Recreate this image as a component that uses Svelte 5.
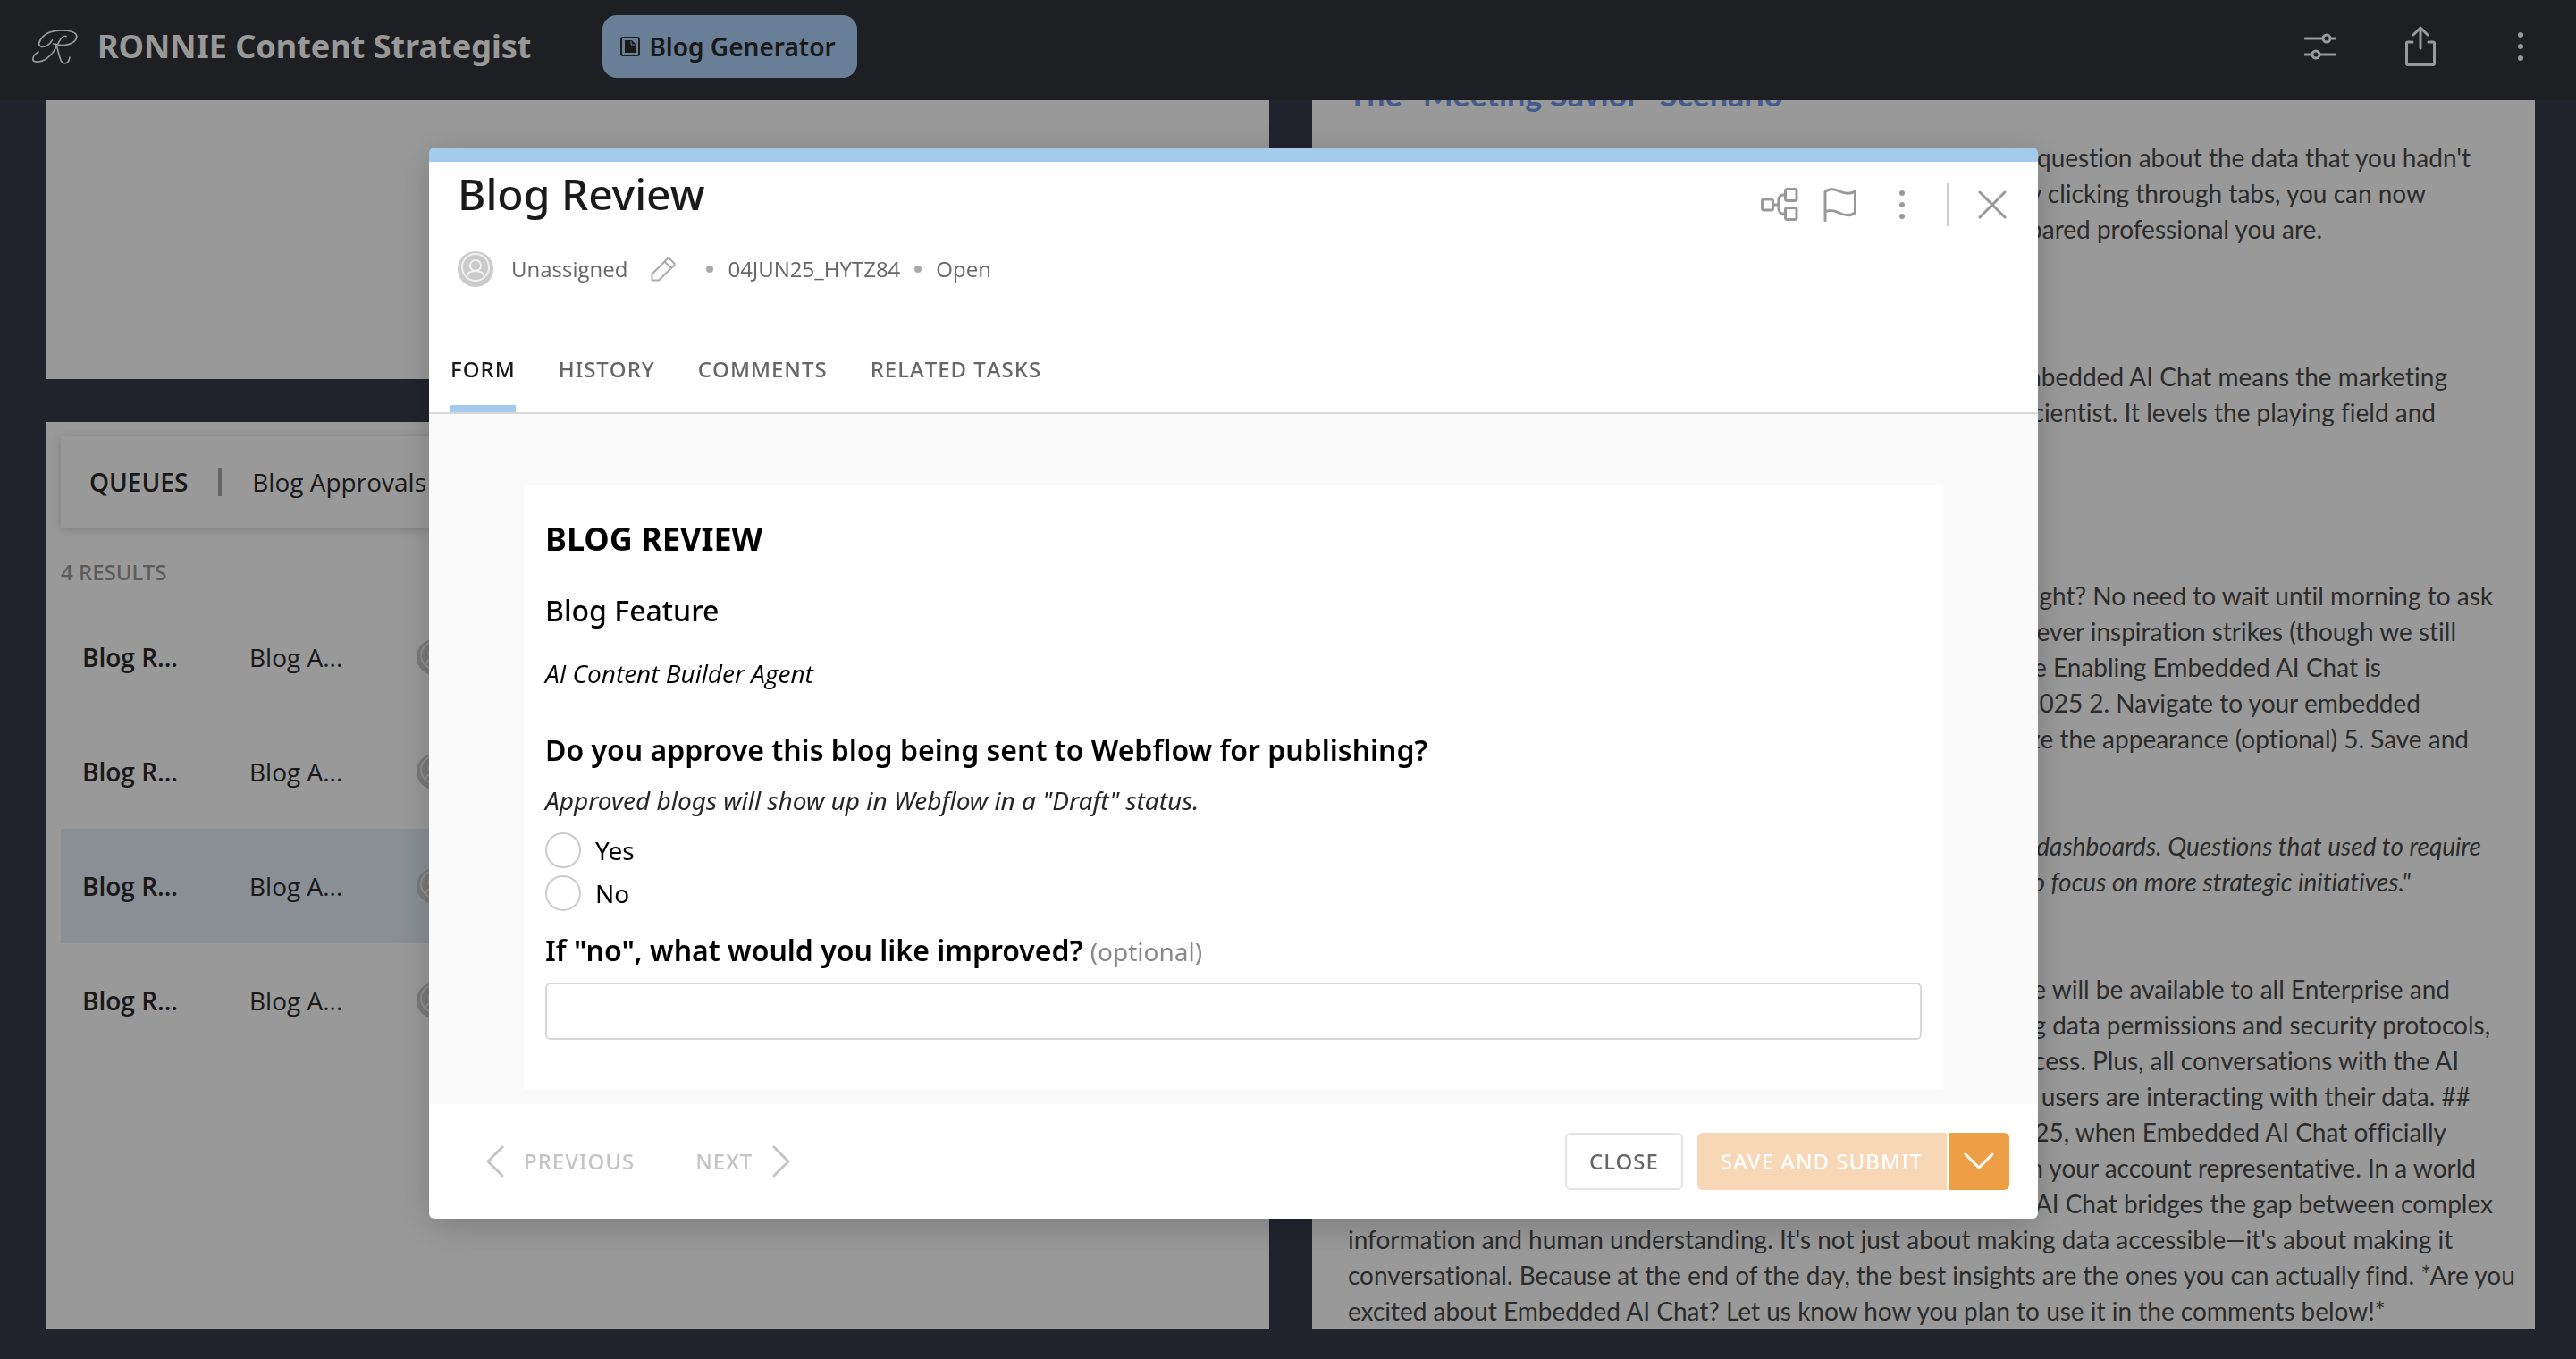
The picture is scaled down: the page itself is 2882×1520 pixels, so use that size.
<script>
  const tabs = ['Form', 'History', 'Comments', 'Related Tasks'];
  let activeTab = 'Form';

  const tasks = [
    { id: 1, name: 'Blog R...', queue: 'Blog A...' },
    { id: 2, name: 'Blog R...', queue: 'Blog A...' },
    { id: 3, name: 'Blog R...', queue: 'Blog A...' },
    { id: 4, name: 'Blog R...', queue: 'Blog A...' }
  ];
  let selected = 3;

  // each line carries its own measure, only the tail shows beside the dialog
  const sections = [
    {
      title: 'The "Meeting Savior" Scenario',
      blocks: [
        {
          lines: [
            [1256, "question about the data that you hadn't"],
            [1206, 'by clicking through tabs, you can now'],
            [1090, 'prepared professional you are.']
          ]
        }
      ]
    },
    {
      blocks: [
        {
          lines: [
            [1230, 'Embedded AI Chat means the marketing'],
            [1217, 'scientist. It levels the playing field and'],
            [400, '']
          ]
        }
      ]
    },
    {
      blocks: [
        {
          lines: [
            [1281, 'midnight? No need to wait until morning to ask'],
            [1240, 'whenever inspiration strikes (though we still'],
            [1156, 'the Enabling Embedded AI Chat is'],
            [1200, '2025 2. Navigate to your embedded'],
            [1254, 'Customize the appearance (optional) 5. Save and']
          ]
        },
        {
          quote: true,
          lines: [
            [1268, 'in dashboards. Questions that used to require'],
            [1189, 'to focus on more strategic initiatives."']
          ]
        },
        {
          lines: [
            [1233, 'feature will be available to all Enterprise and'],
            [1278, 'existing data permissions and security protocols,'],
            [1243, 'access. Plus, all conversations with the AI'],
            [1256, 'users are interacting with their data. ##'],
            [1229, '2025, when Embedded AI Chat officially'],
            [1262, 'in your account representative. In a world'],
            [1281, 'AI Chat bridges the gap between complex']
          ],
          tail: [
            "information and human understanding. It's not just about making data accessible—it's about making it",
            'conversational. Because at the end of the day, the best insights are the ones you can actually find. *Are you',
            'excited about Embedded AI Chat? Let us know how you plan to use it in the comments below!*'
          ]
        }
      ]
    }
  ];

  let approval = '';
  let improvement = '';
</script>

{#snippet avatar()}
  <svg class="avatar" viewBox="0 0 40 40" aria-hidden="true">
    <circle cx="20" cy="20" r="20" fill="#cbcbcb" />
    <g fill="none" stroke="#f1f1f1" stroke-width="2">
      <circle cx="20" cy="18" r="15" />
      <circle cx="20" cy="16" r="6" />
      <path d="M10 29c1-5 5-7 10-7s9 2 10 7" />
    </g>
  </svg>
{/snippet}

<div class="app">
  <header class="topbar">
    <svg class="logo" viewBox="105 85 155 122" aria-hidden="true">
      <path d="M172 125c-8 15-24 24-36 22-14-3-9-21 8-37 18-16 52-20 78-17 24 3 34 12 31 24-5 20-40 32-77 20" />
      <path d="M218 112c-8-4-17 6-23 17-12 24-24 48-46 60-16 9-38 12-41 2-2-9 6-20 18-27" />
      <path d="M184 138c8 19 10 40 17 55 6 13 26 14 29-11" />
    </svg>
    <h1>RONNIE Content Strategist</h1>
    <button class="pill">
      <svg viewBox="0 0 22 22" aria-hidden="true">
        <rect x="1" y="1" width="20" height="20" rx="2" fill="none" stroke="#333" stroke-width="2" />
        <path d="M5 4h8l4 4v10H5z" fill="#2b2b2b" />
        <path d="M12 5v4h4" fill="none" stroke="#aed4fc" />
      </svg>
      Blog Generator
    </button>
    <div class="actions">
      <button aria-label="Filters">
        <svg width="36" height="30" viewBox="0 0 36 30">
          <path d="M1 6h19M30 6h5M1 24h7M18 24h17" />
          <circle cx="25" cy="6" r="4" />
          <circle cx="13" cy="24" r="4" />
        </svg>
      </button>
      <button aria-label="Share">
        <svg width="34" height="46" viewBox="0 0 34 46">
          <path d="M8 18H3a1.500 1.500 0 0 0-1.500 1.500V42A1.500 1.500 0 0 0 3 43.500h28a1.500 1.500 0 0 0 1.500-1.500V19.500A1.500 1.500 0 0 0 31 18h-5M17 25V2M9 10l8-8 8 8" />
        </svg>
      </button>
      <button aria-label="More">
        <svg class="dots" width="8" height="36" viewBox="0 0 8 36">
          <circle cx="4" cy="5" r="3" /><circle cx="4" cy="18" r="3" /><circle cx="4" cy="31" r="3" />
        </svg>
      </button>
    </div>
  </header>

  <main>
    <div class="column">
      <section class="card preview"></section>
      <section class="card queues">
        <div class="queue-bar">
          <strong>QUEUES</strong>
          <span class="bar"></span>
          <span>Blog Approvals</span>
        </div>
        <p class="results">4 RESULTS</p>
        <table>
          <tbody>
            {#each tasks as task}
              <tr class:selected={task.id === selected}>
                <td class="name">{task.name}</td>
                <td class="queue">{task.queue}</td>
                <td>{@render avatar()}</td>
              </tr>
            {/each}
          </tbody>
        </table>
      </section>
    </div>

    <article class="card">
      {#each sections as section}
        <section class="chapter" class:untitled={!section.title}>
          {#if section.title}<h2>{section.title}</h2>{/if}
          {#each section.blocks as block}
            <p class:quote={block.quote}>
              {#each block.lines as [measure, text]}
                <span class="line" style="width: {measure}px">{text}</span>
              {/each}
              {#each block.tail || [] as text}
                <span class="full">{text}</span>
              {/each}
            </p>
          {/each}
        </section>
      {/each}
    </article>
  </main>
</div>

<div class="overlay">
  <div class="modal" role="dialog" aria-labelledby="modal-title">
    <header class="modal-head">
      <div class="heading">
        <h2 id="modal-title">Blog Review</h2>
        <div class="meta">
          {@render avatar()}
          <span class="assignee">Unassigned</span>
          <button class="edit" aria-label="Edit assignee">
            <svg width="28" height="28" viewBox="0 0 28 28">
              <path d="M1.500 19.500 18.500 2.500a2 2 0 0 1 2.800 0l4.700 4.700a2 2 0 0 1 0 2.800L9 26.500H1.500zM15.500 5.500l7.500 7.500" />
            </svg>
          </button>
          <span class="dot"></span>
          <span>04JUN25_HYTZ84</span>
          <span class="dot"></span>
          <span>Open</span>
        </div>
      </div>
      <div class="tools">
        <button aria-label="Workflow">
          <svg width="42" height="38" viewBox="0 0 42 38">
            <rect x="1.500" y="13" width="12" height="12" rx="2" />
            <rect x="27.500" y="1.500" width="12.500" height="13" rx="2" />
            <rect x="27.500" y="22.500" width="12.500" height="13" rx="2" />
            <path d="M13.500 19H20M27 8h-2a5 5 0 0 0-5 5v11a5 5 0 0 0 5 5h2" />
          </svg>
        </button>
        <button aria-label="Flag">
          <svg width="38" height="38" viewBox="0 0 38 38">
            <path d="M2 36.500V4.500C5 1.500 11 .5 17 3.500s12 4.500 18.500.5v24c-6 4.500-12 3-18 0s-11-3.500-15.500-1" />
          </svg>
        </button>
        <button aria-label="More options">
          <svg class="dots" width="8" height="36" viewBox="0 0 8 36">
            <circle cx="4" cy="5" r="3" /><circle cx="4" cy="18" r="3" /><circle cx="4" cy="31" r="3" />
          </svg>
        </button>
        <span class="rule"></span>
        <button aria-label="Close dialog">
          <svg width="32" height="32" viewBox="0 0 32 32"><path d="m2 2 28 28M30 2 2 30" /></svg>
        </button>
      </div>
    </header>

    <nav class="tabs">
      {#each tabs as tab}
        <button class:active={tab === activeTab} on:click={() => (activeTab = tab)}>{tab}</button>
      {/each}
    </nav>

    <div class="modal-body">
      <form class="sheet">
        <h3>BLOG REVIEW</h3>
        <p class="feature">Blog Feature</p>
        <p class="agent">AI Content Builder Agent</p>
        <fieldset>
          <legend>Do you approve this blog being sent to Webflow for publishing?</legend>
          <p class="hint">Approved blogs will show up in Webflow in a "Draft" status.</p>
          <label><input type="radio" name="approval" value="yes" bind:group={approval} />Yes</label>
          <label><input type="radio" name="approval" value="no" bind:group={approval} />No</label>
        </fieldset>
        <label class="field-label" for="improvement">
          If "no", what would you like improved? <small>(optional)</small>
        </label>
        <input id="improvement" type="text" bind:value={improvement} />
      </form>
    </div>

    <footer>
      <button class="step">
        <svg width="20" height="36" viewBox="0 0 20 36"><path d="M18 2 2 18l16 16" /></svg>
        PREVIOUS
      </button>
      <button class="step">
        NEXT
        <svg width="20" height="36" viewBox="0 0 20 36"><path d="m2 2 16 16L2 34" /></svg>
      </button>
      <div class="submit">
        <button class="close">CLOSE</button>
        <button class="save">SAVE AND SUBMIT</button>
        <button class="more" aria-label="More submit options">
          <svg width="34" height="20" viewBox="0 0 34 20"><path d="m2 2 15 15L32 2" /></svg>
        </button>
      </div>
    </footer>
  </div>
</div>

<style>
  :global(body) {
    margin: 0;
    background: #373c4b;
  }

  .app,
  .overlay {
    font-family: 'Noto Sans', 'Open Sans', sans-serif;
    font-size: 28px;
    line-height: 40px;
    color: #2b2b2b;
  }

  .app *,
  .overlay * {
    box-sizing: border-box;
  }

  h1, h2, h3, p {
    margin: 0;
  }

  button {
    border: 0;
    padding: 0;
    background: none;
    font: inherit;
    color: inherit;
    cursor: pointer;
  }

  svg {
    display: block;
    flex: none;
    fill: none;
    stroke-linecap: round;
    stroke-linejoin: round;
  }

  .avatar {
    width: 40px;
    height: 40px;
  }

  .app {
    display: flex;
    flex-direction: column;
    height: 100vh;
  }

  .topbar {
    display: flex;
    align-items: center;
    height: 112px;
    padding: 0 58px 8px 36px;
    background: #32343a;
    color: #fff;
  }

  .logo {
    width: 52px;
    height: 42px;
    margin-right: 21px;
    stroke: #fff;
    stroke-width: 5;
  }

  h1 {
    font-size: 36px;
    line-height: 48px;
    font-weight: 700;
  }

  .pill {
    display: flex;
    align-items: center;
    gap: 10px;
    height: 70px;
    margin-left: 80px;
    padding: 0 24px 0 20px;
    border-radius: 16px;
    background: #aed4fc;
    color: #2b2b2b;
    font-weight: 600;
  }

  .pill svg {
    width: 22px;
    height: 22px;
  }

  .actions {
    display: flex;
    align-items: center;
    gap: 77px;
    margin-left: auto;
  }

  .actions button:last-child {
    margin-left: 14px;
  }

  .actions svg {
    stroke: #fff;
    stroke-width: 3;
  }

  .actions .dots {
    fill: #fff;
    stroke: none;
  }

  main {
    display: grid;
    grid-template-columns: 1fr 1fr;
    gap: 48px;
    flex: 1;
    min-height: 0;
    padding: 0 46px 34px 52px;
  }

  .column,
  article {
    min-width: 0;
    min-height: 0;
  }

  .column {
    display: flex;
    flex-direction: column;
    gap: 48px;
  }

  .card {
    background: #fff;
  }

  .preview {
    height: 312px;
  }

  .queues {
    flex: 1;
    padding: 16px;
  }

  .queue-bar,
  table,
  .meta,
  .agent {
    font-family: 'Open Sans', 'Noto Sans', sans-serif;
  }

  .queue-bar {
    display: flex;
    align-items: center;
    gap: 34px;
    height: 102px;
    padding: 0 32px;
    box-shadow: 0 2px 10px rgba(0, 0, 0, 0.2);
  }

  .queue-bar strong {
    font-weight: 600;
  }

  .bar {
    width: 4px;
    height: 32px;
    background: #aaa;
  }

  .results {
    margin: 30px 0 11px;
    font-size: 24px;
    font-weight: 500;
    color: #999;
  }

  table {
    width: 100%;
    border-collapse: collapse;
    table-layout: fixed;
  }

  tr {
    height: 128px;
  }

  tr.selected {
    background: #e4eff8;
  }

  td {
    padding: 0;
  }

  .name {
    width: 211px;
    padding-left: 24px;
    font-weight: 600;
  }

  .queue {
    width: 187px;
  }

  article {
    display: flex;
    flex-direction: column;
    justify-content: flex-end;
    overflow: hidden;
    padding: 0 40px;
    font-family: Lato, sans-serif;
    font-variant-ligatures: none;
    color: #4a4a4a;
  }

  article h2 {
    margin-bottom: 28px;
    font-size: 36px;
    line-height: 45px;
    font-weight: 700;
    color: #7396ec;
  }

  .untitled {
    margin-top: 125px;
  }

  .chapter p + p {
    margin-top: 80px;
  }

  .quote {
    font-style: italic;
  }

  .line,
  .full {
    display: block;
    height: 40px;
    white-space: nowrap;
  }

  .line {
    text-align: right;
  }

  .overlay {
    position: fixed;
    inset: 0;
    display: flex;
    align-items: flex-start;
    padding: 165px 602px 0 480px;
    background: rgba(0, 0, 0, 0.4);
  }

  .modal {
    flex: 1;
    overflow: hidden;
    border-top: 16px solid #a4caec;
    border-radius: 6px;
    background: #fff;
    box-shadow: 0 8px 40px rgba(0, 0, 0, 0.2);
  }

  .modal-head {
    display: flex;
    justify-content: space-between;
    padding: 4px 35px 0 32px;
  }

  .modal-head h2 {
    margin-bottom: 32px;
    font-size: 48px;
    line-height: 64px;
    font-weight: 500;
    color: #1a1a1a;
  }

  .meta {
    display: flex;
    align-items: center;
    gap: 16px;
    font-size: 24px;
    color: #666;
  }

  .assignee {
    margin: 0 10px 0 4px;
  }

  .edit {
    margin-right: 18px;
  }

  .edit svg {
    stroke: #aaa;
    stroke-width: 2;
  }

  .dot {
    width: 8px;
    height: 8px;
    border-radius: 50%;
    background: #aaa;
  }

  .tools {
    display: flex;
    align-items: center;
    gap: 28px;
    height: 88px;
  }

  .tools svg {
    stroke: #999;
    stroke-width: 3;
  }

  .tools .dots {
    margin: 0 18px;
    fill: #999;
    stroke: none;
  }

  .rule {
    width: 2px;
    height: 48px;
    margin-right: 5px;
    background: #ccc;
  }

  .tabs {
    display: flex;
    gap: 48px;
    margin-top: 76px;
    padding: 0 24px;
    border-bottom: 2px solid #d8d8d8;
  }

  .tabs button {
    padding-bottom: 24px;
    border-bottom: 8px solid transparent;
    font-size: 24px;
    line-height: 32px;
    font-weight: 500;
    font-kerning: none;
    letter-spacing: 1px;
    text-transform: uppercase;
    color: #666;
  }

  .tabs .active {
    border-color: #a4caec;
    color: #1a1a1a;
  }

  .modal-body {
    padding: 80px 106px 16px;
    background: #fafafa;
  }

  .sheet {
    padding: 36px 24px 56px;
    background: #fff;
    color: #000;
  }

  h3 {
    font-size: 36px;
    line-height: 48px;
    font-weight: 700;
  }

  .feature {
    margin: 34px 0 28px;
    font-size: 32px;
    line-height: 44px;
    font-weight: 500;
  }

  .agent,
  .hint {
    font-style: italic;
  }

  fieldset {
    margin: 44px 0 22px;
    padding: 0;
    border: 0;
  }

  legend,
  .field-label {
    padding: 0;
    font-size: 32px;
    line-height: 44px;
    font-weight: 600;
  }

  .hint {
    margin: 14px 0 16px;
    color: #262626;
  }

  fieldset label {
    display: flex;
    align-items: center;
    gap: 16px;
  }

  fieldset label + label {
    margin-top: 8px;
  }

  input[type='radio'] {
    appearance: none;
    width: 40px;
    height: 40px;
    margin: 0;
    border: 2px solid #ccc;
    border-radius: 50%;
    background: #fff;
  }

  input[type='radio']:checked {
    border: 12px solid #a4caec;
  }

  .field-label {
    display: block;
  }

  small {
    font-size: 28px;
    line-height: 32px;
    font-weight: 400;
    color: #888;
  }

  input[type='text'] {
    display: block;
    width: 100%;
    height: 64px;
    margin-top: 14px;
    padding: 0 16px;
    border: 2px solid #d8d8d8;
    border-radius: 6px;
    background: #fff;
    font: inherit;
  }

  footer {
    display: flex;
    align-items: center;
    gap: 68px;
    padding: 32px 32px 32px 64px;
    font-size: 24px;
    font-weight: 500;
    letter-spacing: 1px;
  }

  .step {
    display: flex;
    align-items: center;
    gap: 22px;
    color: #c4c4c4;
    letter-spacing: inherit;
  }

  .step svg {
    stroke: #c4c4c4;
    stroke-width: 3;
  }

  .submit {
    display: flex;
    margin-left: auto;
  }

  .submit button {
    height: 64px;
    letter-spacing: inherit;
  }

  .submit .close {
    margin-right: 16px;
    padding: 0 25px;
    border: 2px solid #e4e4e4;
    border-radius: 6px;
    color: #666;
  }

  .submit .save {
    margin-right: 2px;
    padding: 0 27px 0 26px;
    border-radius: 6px 0 0 6px;
    background: #f7d7b5;
    color: #fff;
  }

  .submit .more {
    display: grid;
    place-items: center;
    width: 68px;
    border-radius: 0 6px 6px 0;
    background: #ee9e44;
  }

  .more svg {
    stroke: #fff;
    stroke-width: 3;
  }
</style>
